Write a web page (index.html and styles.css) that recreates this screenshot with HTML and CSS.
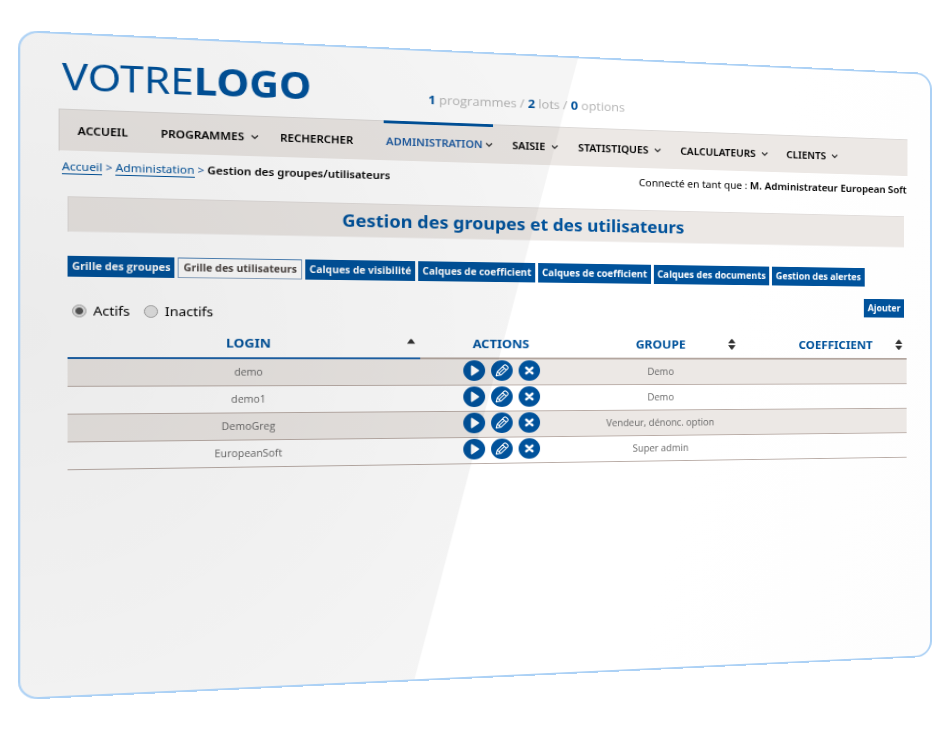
FILE: index.html
```html
<!DOCTYPE html>
<html lang="fr">
<head>
<meta charset="utf-8">
<title>Gestion des groupes et des utilisateurs</title>
<link rel="stylesheet" href="styles.css">
</head>
<body>
<svg class="sprite" aria-hidden="true">
  <symbol id="chevron" viewBox="0 0 8 8"><path d="M1 2.5 4 5.5 7 2.5" fill="none" stroke="#333" stroke-width="1.3"/></symbol>
  <symbol id="sort-up" viewBox="0 0 8 14"><path d="M0 7.5 3 3Q4 2 5 3L8 7.5Z" fill="#333"/></symbol>
  <symbol id="sort-both" viewBox="0 0 8 14"><path d="M0 6 3.2 1.6Q4 .8 4.8 1.6L8 6ZM0 8 3.2 12.4Q4 13.2 4.8 12.4L8 8Z" fill="#333"/></symbol>
  <symbol id="play" viewBox="0 0 22 22"><circle cx="11" cy="11" r="11" fill="#00529b"/><path d="M8.6 6.4 15 11 8.6 15.6Z" fill="#fff" stroke="#fff" stroke-width="1.8" stroke-linejoin="round"/></symbol>
  <symbol id="edit" viewBox="0 0 22 22"><circle cx="11" cy="11" r="11" fill="#00529b"/><path d="M5.2 16.6 6.3 12.3 13 5.4Q14.2 4.4 15.5 5.4L16.9 6.9Q17.8 8.1 16.8 9.2L10 15.8ZM6.3 12.3 10 15.8M11.8 6.8 15.4 10.4M8.3 13.6 13.4 8.6" fill="none" stroke="#fff" stroke-width="1.1" stroke-linejoin="round"/></symbol>
  <symbol id="remove" viewBox="0 0 22 22"><circle cx="11" cy="11" r="11" fill="#00529b"/><path d="M7.9 8 14.1 14M14.1 8 7.9 14" fill="none" stroke="#fff" stroke-width="2.6" stroke-linecap="round"/></symbol>
</svg>
<div class="stage">
<div class="panel">
  <header class="header">
    <a class="logo" href="#">VOTRE<b>LOGO</b></a>
    <p class="counts"><b>1</b> programmes / <b>2</b> lots / <b>0</b> options</p>
  </header>
  <nav class="nav" aria-label="Menu principal">
    <a class="nav-item plain" href="#">ACCUEIL</a>
    <a class="nav-item" href="#">PROGRAMMES<svg><use href="#chevron"/></svg></a>
    <a class="nav-item plain" href="#">RECHERCHER</a>
    <a class="nav-item active" href="#">ADMINISTRATION<svg><use href="#chevron"/></svg></a>
    <a class="nav-item" href="#">SAISIE<svg><use href="#chevron"/></svg></a>
    <a class="nav-item" href="#">STATISTIQUES<svg><use href="#chevron"/></svg></a>
    <a class="nav-item" href="#">CALCULATEURS<svg><use href="#chevron"/></svg></a>
    <a class="nav-item" href="#">CLIENTS<svg><use href="#chevron"/></svg></a>
  </nav>
  <div class="subhead">
    <div class="crumbs"><a href="#">Accueil</a> <i>&gt;</i> <a href="#">Administation</a> <i>&gt;</i> <b>Gestion des groupes/utilisateurs</b></div>
    <div class="session">Connecté en tant que : <b>M. Administrateur European Soft</b></div>
  </div>
  <main class="content">
    <h1 class="title">Gestion des groupes et des utilisateurs</h1>
    <div class="tabs">
      <button class="tab" type="button">Grille des groupes</button>
      <button class="tab current" type="button">Grille des utilisateurs</button>
      <button class="tab" type="button">Calques de visibilité</button>
      <button class="tab" type="button">Calques de coefficient</button>
      <button class="tab" type="button">Calques de coefficient</button>
      <button class="tab" type="button">Calques des documents</button>
      <button class="tab" type="button">Gestion des alertes</button>
    </div>
    <div class="filters">
      <label class="choice"><input type="radio" name="state" checked>Actifs</label>
      <label class="choice"><input type="radio" name="state">Inactifs</label>
      <button class="tab add" type="button">Ajouter</button>
    </div>
    <table class="grid">
      <colgroup><col class="c-login"><col class="c-actions"><col class="c-group"><col class="c-coef"></colgroup>
      <thead>
        <tr>
          <th class="sorted">LOGIN<svg class="sort"><use href="#sort-up"/></svg></th>
          <th>ACTIONS</th>
          <th>GROUPE<svg class="sort"><use href="#sort-both"/></svg></th>
          <th class="last">COEFFICIENT<svg class="sort"><use href="#sort-both"/></svg></th>
        </tr>
      </thead>
      <tbody>
        <tr><td>demo</td><td><div class="actions"><button type="button" aria-label="Lancer"><svg><use href="#play"/></svg></button><button type="button" aria-label="Modifier"><svg><use href="#edit"/></svg></button><button type="button" aria-label="Supprimer"><svg><use href="#remove"/></svg></button></div></td><td>Demo</td><td></td></tr>
        <tr><td>demo1</td><td><div class="actions"><button type="button" aria-label="Lancer"><svg><use href="#play"/></svg></button><button type="button" aria-label="Modifier"><svg><use href="#edit"/></svg></button><button type="button" aria-label="Supprimer"><svg><use href="#remove"/></svg></button></div></td><td>Demo</td><td></td></tr>
        <tr><td>DemoGreg</td><td><div class="actions"><button type="button" aria-label="Lancer"><svg><use href="#play"/></svg></button><button type="button" aria-label="Modifier"><svg><use href="#edit"/></svg></button><button type="button" aria-label="Supprimer"><svg><use href="#remove"/></svg></button></div></td><td>Vendeur, dénonc. option</td><td></td></tr>
        <tr><td>EuropeanSoft</td><td><div class="actions"><button type="button" aria-label="Lancer"><svg><use href="#play"/></svg></button><button type="button" aria-label="Modifier"><svg><use href="#edit"/></svg></button><button type="button" aria-label="Supprimer"><svg><use href="#remove"/></svg></button></div></td><td>Super admin</td><td></td></tr>
      </tbody>
    </table>
  </main>
</div>
</div>
</body>
</html>
```
FILE: styles.css
```css
* { box-sizing: border-box; }

body {
  margin: 0;
  background: #fff;
  color: #000;
  font-family: "Noto Sans", "Open Sans", sans-serif;
  font-size: 12px;
}

.sprite { position: absolute; width: 0; height: 0; }

/* The whole screen is a pane of glass turned away to the right. */
.stage {
  display: flex;
  min-height: 100vh;
  padding: 30px 7px 29px 18px;
  overflow: hidden;
  perspective: 1084px;
  perspective-origin: 100% 50%;
}

.panel {
  position: relative;
  flex: 1;
  padding: 0 26px 0 34px;
  border: 2px solid #acd1f5;
  border-radius: 18px;
  background: linear-gradient(105deg, #fff 70%, #fdfdfd);
  transform: rotateY(10deg);
  transform-origin: 0 50%;
}

/* Reflection across the left half. */
.panel::after {
  content: "";
  position: absolute;
  inset: 0;
  border-radius: 16px;
  background: radial-gradient(circle at 0 45%, rgba(0, 0, 0, 0.08), rgba(0, 0, 0, 0.04) 55%);
  clip-path: polygon(0 0, 58% 0, 40% 100%, 0 100%);
  pointer-events: none;
}

.header {
  display: flex;
  align-items: baseline;
  gap: 114px;
  height: 75px;
  padding: 15px 0 0 3px;
}

.logo {
  color: #00529b;
  font-size: 39px;
  line-height: 52px;
  text-decoration: none;
}

.counts {
  margin: 0;
  color: #b5b5b5;
  font-family: "Open Sans", sans-serif;
  font-size: 13px;
}

.counts b { color: #00529b; }

.nav {
  display: flex;
  gap: 20px;
  height: 43px;
  padding: 0 16px;
  border: 1px solid #dcd9d7;
  border-right: 0;
  border-bottom-color: #fff;
  background: #ece8e5;
}

.nav-item {
  display: flex;
  align-items: center;
  gap: 6px;
  color: #000;
  font-size: 11px;
  font-weight: 600;
  text-decoration: none;
}

.nav-item.plain { padding-right: 10px; }

.nav-item svg { width: 8px; height: 8px; }

.nav-item.active {
  gap: 2px;
  margin-top: -1px;
  border-top: 3px solid #00529b;
  padding: 0 0 2px 2px;
  color: #1d5aa0;
}

.subhead {
  display: flex;
  justify-content: space-between;
  align-items: center;
  height: 28px;
  padding: 0 1px 0 3px;
  font-size: 11px;
}

.subhead b { font-weight: 600; }
.crumbs i { color: #1d5aa0; font-style: normal; }
.crumbs a { color: #00529b; border-bottom: 1px solid; text-decoration: none; }

.content { padding: 17px 1px 0 8px; }

.title {
  margin: 0 3px 24px 0;
  padding-left: 10px;
  border: 1px solid #e1dddb;
  border-right: 0;
  border-bottom-color: #f4f2f1;
  background: #ece8e5;
  color: #00529b;
  font-size: 18px;
  line-height: 34px;
  font-weight: 700;
  text-align: center;
}

.tabs { display: flex; gap: 3px; }

.tab {
  height: 21px;
  padding: 0 4px;
  border: 0;
  background: #00529b;
  color: #fff;
  font: 700 10px/21px "Open Sans", sans-serif;
  white-space: nowrap;
}

.tab.current {
  border: 1px solid #8fa9c6;
  border-top-color: #4d83b8;
  background: #fff;
  color: #4a4340;
  line-height: 19px;
}

.filters {
  display: flex;
  align-items: center;
  gap: 13px;
  height: 40px;
  margin: 14px 3px 0 4px;
}

.choice {
  display: flex;
  align-items: center;
  gap: 6px;
  font-size: 13px;
}

.choice input {
  appearance: none;
  width: 13px;
  height: 13px;
  margin: 0;
  border: 1px solid #a5a5a5;
  border-radius: 50%;
  background: #e4e4e4;
}

.choice input:checked {
  background: radial-gradient(circle, #555 3px, #e4e4e4 4px);
}

.add {
  align-self: flex-start;
  margin-left: auto;
}

.grid {
  width: 100%;
  border-collapse: collapse;
  table-layout: fixed;
}

.c-login { width: 39%; }
.c-actions { width: 19%; }
.c-group { width: 20%; }

.grid th {
  position: relative;
  height: 28px;
  padding: 0 0 4px;
  border-bottom: 2px solid #b3a69f;
  color: #00529b;
  font-size: 13px;
  line-height: 18px;
}

.grid th.sorted { border-bottom-color: #1d62a8; }
.grid th.last { padding-left: 26px; }

.sort {
  position: absolute;
  top: 5px;
  right: 5px;
  width: 8px;
  height: 14px;
}

.grid td {
  height: 28px;
  padding: 0;
  border-bottom: 1px solid #b9aca6;
  color: #666;
  font-family: "Open Sans", sans-serif;
  font-size: 10px;
  text-align: center;
}

.grid tbody tr:nth-child(odd) { background: #ece8e5; }

.actions {
  display: flex;
  justify-content: center;
  gap: 6px;
  padding: 0 0 2px 2px;
}

.actions button {
  width: 22px;
  height: 22px;
  padding: 0;
  border: 0;
  border-radius: 50%;
  background: none;
}

.actions svg { display: block; width: 22px; height: 22px; }
```
